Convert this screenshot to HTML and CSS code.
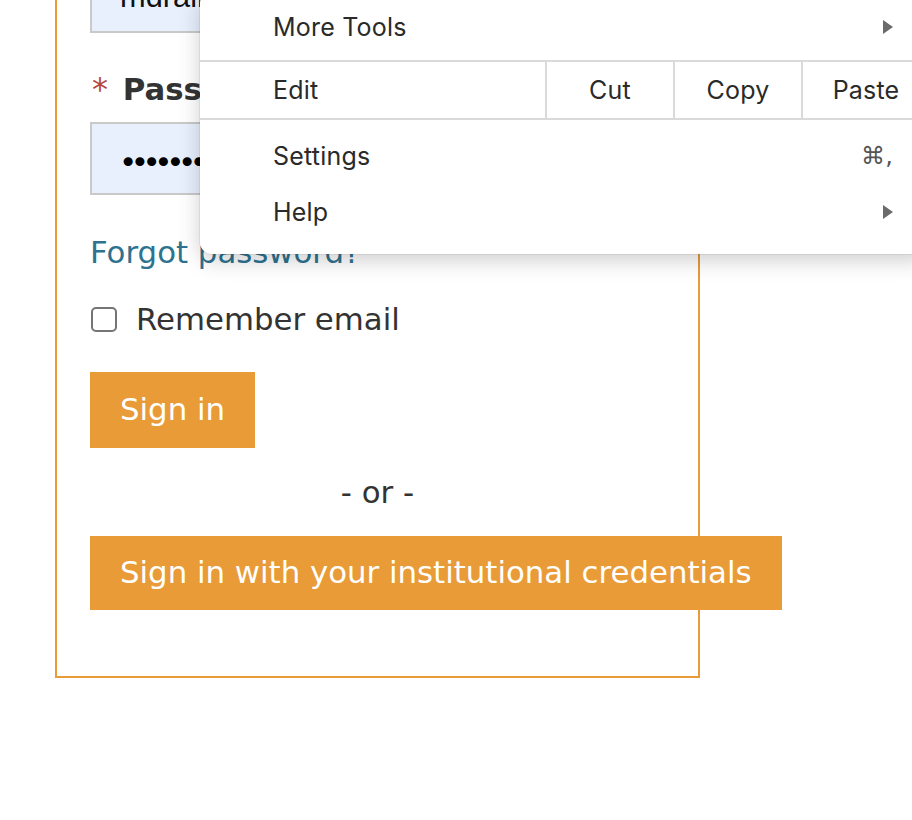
FILE: index.html
```html
<!DOCTYPE html>
<html lang="en">
<head>
    <meta charset="UTF-8">
    <meta name="viewport" content="width=device-width, initial-scale=1.0">
    <title>Sign in</title>
    <link rel="stylesheet" href="styles.css">
</head>
<body>
    <div class="page">
        <form class="login-box" onsubmit="return false;">
            <div class="field">
                <label for="email"><span class="req">*</span> Email</label>
                <input type="text" id="email" value="mdrain@university.edu">
            </div>

            <div class="field">
                <label for="password"><span class="req">*</span> Password</label>
                <input type="password" id="password" class="pw" value="password123">
            </div>

            <a class="forgot" href="#">Forgot password?</a>

            <div class="remember">
                <input type="checkbox" id="remember">
                <label for="remember">Remember email</label>
            </div>

            <button type="submit" class="btn">Sign in</button>

            <p class="or">- or -</p>

            <button type="button" class="btn btn-wide">Sign in with your institutional credentials</button>
        </form>
    </div>

    <!-- browser context menu -->
    <div class="menu">
        <div class="menu-item">
            <span>More Tools</span>
            <svg class="arrow" width="10" height="14" viewBox="0 0 10 14"><path d="M0 0 L10 7 L0 14 Z"/></svg>
        </div>
        <div class="menu-row">
            <div class="menu-cell first">Edit</div>
            <div class="menu-cell">Cut</div>
            <div class="menu-cell">Copy</div>
            <div class="menu-cell">Paste</div>
        </div>
        <div class="menu-item">
            <span>Settings</span>
            <span class="shortcut">&#8984;,</span>
        </div>
        <div class="menu-item">
            <span>Help</span>
            <svg class="arrow" width="10" height="14" viewBox="0 0 10 14"><path d="M0 0 L10 7 L0 14 Z"/></svg>
        </div>
    </div>
</body>
</html>
```

FILE: styles.css
```css
html, body {
    margin: 0;
    overflow: hidden;
    background: #fff;
}

body {
    font-family: "DejaVu Sans", Verdana, sans-serif;
    font-size: 30.8px;
    line-height: 35px;
    color: #333;
}

.page {
    padding-left: 55px;
}

.login-box {
    display: flex;
    flex-direction: column;
    align-items: flex-start;
    width: 575px;
    margin-top: -125px;
    padding: 33px 33px 66px 33px;
    border: 2px solid #e89b37;
}

.field {
    width: 100%;
    margin-bottom: 39px;
}

.field label {
    display: block;
    margin-bottom: 15px;
    font-weight: bold;
}

.req {
    display: inline-block;
    margin: 0 4px 0 2px;
    color: #b5473c;
    font-weight: normal;
    font-size: 32px;
}

.field input {
    box-sizing: border-box;
    width: 100%;
    height: 73px;
    padding: 0 28px;
    border: 2px solid #c9c9c9;
    background: #e8f0fe;
    font-family: "Liberation Sans", Arial, sans-serif;
    font-size: 30.8px;
    color: #111;
    outline: none;
}

.field input.pw {
    padding: 7px 0 0 27px;
    font-family: "DejaVu Sans", Verdana, sans-serif;
    font-size: 31px;
    letter-spacing: -6.5px;
    color: #000;
}

.forgot {
    margin-top: 1px;
    color: #2d7390;
    text-decoration: none;
}

.remember {
    display: flex;
    align-items: center;
    gap: 19px;
    margin-top: 32px;
}

.remember input {
    appearance: none;
    -webkit-appearance: none;
    box-sizing: border-box;
    width: 26px;
    height: 25px;
    margin: 0 0 0 1px;
    border: 2px solid #757575;
    border-radius: 5px;
    background: #fff;
}

.btn {
    margin-top: 35px;
    padding: 20px 30px 21px 30px;
    border: none;
    background-color: #e89b37;
    color: #fff;
    font-family: inherit;
    font-size: 30.8px;
    line-height: 35px;
    cursor: pointer;
    white-space: nowrap;
}

.or {
    align-self: center;
    margin: 27px 0 0 0;
}

.btn-wide {
    margin-top: 26px;
    padding: 19px 30px 20px 30px;
}

/* context menu */
.menu {
    position: absolute;
    left: 200px;
    top: -9px;
    width: 729px;
    padding: 8px 0 14px 0;
    background: #fff;
    border-radius: 12px;
    box-shadow: 0 6px 22px rgba(0, 0, 0, 0.2), 0 0 0 1px rgba(0, 0, 0, 0.06);
    font-family: Inter, "Noto Sans", sans-serif;
    font-size: 25px;
    letter-spacing: 0.2px;
    color: #2a2a2a;
}

.menu-item {
    display: flex;
    align-items: center;
    justify-content: space-between;
    height: 56px;
    padding: 0 36px 0 73px;
}

.menu-row {
    display: flex;
    height: 56px;
    margin: 5px 0 8px 0;
    border-top: 2px solid #dadada;
    border-bottom: 2px solid #dadada;
}

.menu-cell {
    display: flex;
    align-items: center;
    justify-content: center;
    width: 126px;
    border-left: 2px solid #dadada;
}

.menu-cell.first {
    justify-content: flex-start;
    width: 272px;
    padding-left: 73px;
    border-left: none;
}

.arrow {
    fill: #6b6b6b;
}

.shortcut {
    color: #555;
    font-family: "DejaVu Sans", sans-serif;
    font-size: 24px;
}
```
